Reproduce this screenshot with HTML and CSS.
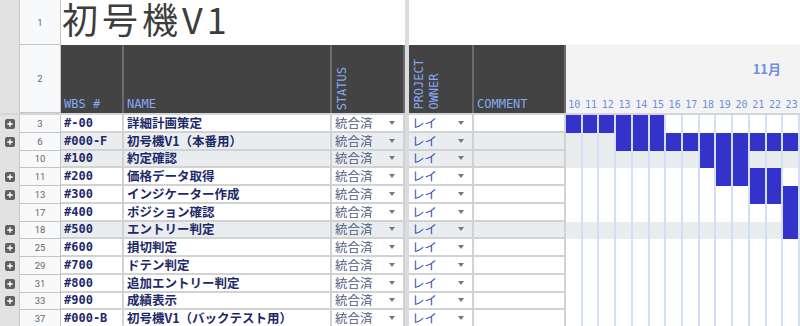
FILE: index.html
```html
<!DOCTYPE html>
<html lang="ja">
<head>
    <meta charset="UTF-8">
    <title>初号機V1 WBS</title>
    <link rel="stylesheet" href="styles.css">
</head>
<body>
<div class="sheet">

    <!-- row 1: title -->
    <div class="row r-title">
        <div class="gut"></div>
        <div class="num">1</div>
        <div class="title">初号機V1</div>
        <div class="freeze"></div>
        <div class="blank"></div>
    </div>

    <!-- row 2: column headers -->
    <div class="row r-head">
        <div class="gut"></div>
        <div class="num">2</div>
        <div class="th">WBS #</div>
        <div class="th">NAME</div>
        <div class="th"><span class="v">STATUS</span></div>
        <div class="freeze"></div>
        <div class="th"><span class="v">PROJECT<br>OWNER</span></div>
        <div class="th">COMMENT</div>
        <div class="ghead">
            <div class="month">11月</div>
            <div class="days">
                <span>10</span><span>11</span><span>12</span><span>13</span><span>14</span><span>15</span><span>16</span>
                <span>17</span><span>18</span><span>19</span><span>20</span><span>21</span><span>22</span><span>23</span>
            </div>
        </div>
    </div>

    <div class="split"></div>

    <!-- tasks -->
    <div class="row r-data">
        <div class="gut"><svg class="plus" viewBox="0 0 10 10"><rect width="10" height="10" rx="2"/><path d="M5 2.2v5.6M2.2 5h5.6"/></svg></div>
        <div class="num">3</div>
        <div class="c wbs">#-00</div>
        <div class="c name">詳細計画策定</div>
        <div class="c status">統合済<i class="arrow"></i></div>
        <div class="freeze"></div>
        <div class="c owner">レイ<i class="arrow"></i></div>
        <div class="c"></div>
        <div class="gantt"><i class="on"></i><i class="on"></i><i class="on"></i><i class="on"></i><i class="on"></i><i class="on"></i><i></i><i></i><i></i><i></i><i></i><i></i><i></i><i></i></div>
    </div>

    <div class="row r-data alt">
        <div class="gut"><svg class="plus" viewBox="0 0 10 10"><rect width="10" height="10" rx="2"/><path d="M5 2.2v5.6M2.2 5h5.6"/></svg></div>
        <div class="num">6</div>
        <div class="c wbs">#000-F</div>
        <div class="c name">初号機V1（本番用）</div>
        <div class="c status">統合済<i class="arrow"></i></div>
        <div class="freeze"></div>
        <div class="c owner">レイ<i class="arrow"></i></div>
        <div class="c"></div>
        <div class="gantt"><i></i><i></i><i></i><i class="on"></i><i class="on"></i><i class="on"></i><i class="on"></i><i class="on"></i><i class="on"></i><i class="on"></i><i class="on"></i><i class="on"></i><i class="on"></i><i class="on"></i></div>
    </div>

    <div class="row r-data alt">
        <div class="gut"></div>
        <div class="num">10</div>
        <div class="c wbs">#100</div>
        <div class="c name">約定確認</div>
        <div class="c status">統合済<i class="arrow"></i></div>
        <div class="freeze"></div>
        <div class="c owner">レイ<i class="arrow"></i></div>
        <div class="c"></div>
        <div class="gantt"><i></i><i></i><i></i><i></i><i></i><i></i><i></i><i></i><i class="on"></i><i class="on"></i><i class="on"></i><i></i><i></i><i></i></div>
    </div>

    <div class="row r-data">
        <div class="gut"><svg class="plus" viewBox="0 0 10 10"><rect width="10" height="10" rx="2"/><path d="M5 2.2v5.6M2.2 5h5.6"/></svg></div>
        <div class="num">11</div>
        <div class="c wbs">#200</div>
        <div class="c name">価格データ取得</div>
        <div class="c status">統合済<i class="arrow"></i></div>
        <div class="freeze"></div>
        <div class="c owner">レイ<i class="arrow"></i></div>
        <div class="c"></div>
        <div class="gantt"><i></i><i></i><i></i><i></i><i></i><i></i><i></i><i></i><i></i><i class="on"></i><i class="on"></i><i class="on"></i><i class="on"></i><i></i></div>
    </div>

    <div class="row r-data">
        <div class="gut"><svg class="plus" viewBox="0 0 10 10"><rect width="10" height="10" rx="2"/><path d="M5 2.2v5.6M2.2 5h5.6"/></svg></div>
        <div class="num">13</div>
        <div class="c wbs">#300</div>
        <div class="c name">インジケーター作成</div>
        <div class="c status">統合済<i class="arrow"></i></div>
        <div class="freeze"></div>
        <div class="c owner">レイ<i class="arrow"></i></div>
        <div class="c"></div>
        <div class="gantt"><i></i><i></i><i></i><i></i><i></i><i></i><i></i><i></i><i></i><i></i><i></i><i class="on"></i><i class="on"></i><i class="on"></i></div>
    </div>

    <div class="row r-data">
        <div class="gut"></div>
        <div class="num">17</div>
        <div class="c wbs">#400</div>
        <div class="c name">ポジション確認</div>
        <div class="c status">統合済<i class="arrow"></i></div>
        <div class="freeze"></div>
        <div class="c owner">レイ<i class="arrow"></i></div>
        <div class="c"></div>
        <div class="gantt"><i></i><i></i><i></i><i></i><i></i><i></i><i></i><i></i><i></i><i></i><i></i><i></i><i></i><i class="on"></i></div>
    </div>

    <div class="row r-data alt">
        <div class="gut"><svg class="plus" viewBox="0 0 10 10"><rect width="10" height="10" rx="2"/><path d="M5 2.2v5.6M2.2 5h5.6"/></svg></div>
        <div class="num">18</div>
        <div class="c wbs">#500</div>
        <div class="c name">エントリー判定</div>
        <div class="c status">統合済<i class="arrow"></i></div>
        <div class="freeze"></div>
        <div class="c owner">レイ<i class="arrow"></i></div>
        <div class="c"></div>
        <div class="gantt"><i></i><i></i><i></i><i></i><i></i><i></i><i></i><i></i><i></i><i></i><i></i><i></i><i></i><i class="on"></i></div>
    </div>

    <div class="row r-data">
        <div class="gut"><svg class="plus" viewBox="0 0 10 10"><rect width="10" height="10" rx="2"/><path d="M5 2.2v5.6M2.2 5h5.6"/></svg></div>
        <div class="num">25</div>
        <div class="c wbs">#600</div>
        <div class="c name">損切判定</div>
        <div class="c status">統合済<i class="arrow"></i></div>
        <div class="freeze"></div>
        <div class="c owner">レイ<i class="arrow"></i></div>
        <div class="c"></div>
        <div class="gantt"><i></i><i></i><i></i><i></i><i></i><i></i><i></i><i></i><i></i><i></i><i></i><i></i><i></i><i></i></div>
    </div>

    <div class="row r-data">
        <div class="gut"><svg class="plus" viewBox="0 0 10 10"><rect width="10" height="10" rx="2"/><path d="M5 2.2v5.6M2.2 5h5.6"/></svg></div>
        <div class="num">29</div>
        <div class="c wbs">#700</div>
        <div class="c name">ドテン判定</div>
        <div class="c status">統合済<i class="arrow"></i></div>
        <div class="freeze"></div>
        <div class="c owner">レイ<i class="arrow"></i></div>
        <div class="c"></div>
        <div class="gantt"><i></i><i></i><i></i><i></i><i></i><i></i><i></i><i></i><i></i><i></i><i></i><i></i><i></i><i></i></div>
    </div>

    <div class="row r-data">
        <div class="gut"><svg class="plus" viewBox="0 0 10 10"><rect width="10" height="10" rx="2"/><path d="M5 2.2v5.6M2.2 5h5.6"/></svg></div>
        <div class="num">31</div>
        <div class="c wbs">#800</div>
        <div class="c name">追加エントリー判定</div>
        <div class="c status">統合済<i class="arrow"></i></div>
        <div class="freeze"></div>
        <div class="c owner">レイ<i class="arrow"></i></div>
        <div class="c"></div>
        <div class="gantt"><i></i><i></i><i></i><i></i><i></i><i></i><i></i><i></i><i></i><i></i><i></i><i></i><i></i><i></i></div>
    </div>

    <div class="row r-data">
        <div class="gut"><svg class="plus" viewBox="0 0 10 10"><rect width="10" height="10" rx="2"/><path d="M5 2.2v5.6M2.2 5h5.6"/></svg></div>
        <div class="num">33</div>
        <div class="c wbs">#900</div>
        <div class="c name">成績表示</div>
        <div class="c status">統合済<i class="arrow"></i></div>
        <div class="freeze"></div>
        <div class="c owner">レイ<i class="arrow"></i></div>
        <div class="c"></div>
        <div class="gantt"><i></i><i></i><i></i><i></i><i></i><i></i><i></i><i></i><i></i><i></i><i></i><i></i><i></i><i></i></div>
    </div>

    <div class="row r-data">
        <div class="gut"></div>
        <div class="num">37</div>
        <div class="c wbs">#000-B</div>
        <div class="c name">初号機V1（バックテスト用）</div>
        <div class="c status">統合済<i class="arrow"></i></div>
        <div class="freeze"></div>
        <div class="c owner">レイ<i class="arrow"></i></div>
        <div class="c"></div>
        <div class="gantt"><i></i><i></i><i></i><i></i><i></i><i></i><i></i><i></i><i></i><i></i><i></i><i></i><i></i><i></i></div>
    </div>

</div>
</body>
</html>
```

FILE: styles.css
```css
* {
    box-sizing: border-box;
}
body {
    margin: 0;
    width: 800px;
    height: 326px;
    overflow: hidden;
    background-color: #fff;
    font-family: "Noto Sans CJK JP", "Noto Sans", sans-serif;
}
.row {
    display: grid;
    grid-template-columns: 20px 41px 63px 208px 73px 4px 65px 92px 234px;
}
.r-title {
    height: 45px;
}
.r-head {
    height: 68px;
}
.r-data {
    height: 17.75px;
}
.split {
    height: 2px;
    background-color: #d3d5d9;
}

/* left gutter + row numbers */
.gut {
    background-color: #e2e2e2;
    border-right: 1px solid #c9c9c9;
    display: flex;
    align-items: center;
    justify-content: center;
}
.plus {
    width: 10px;
    height: 10px;
}
.plus rect {
    fill: #5f5f5f;
}
.plus path {
    stroke: #fff;
    stroke-width: 1.4;
}
.num {
    background-color: #f8f9fa;
    border-right: 1px solid #c4c4c4;
    border-bottom: 1px solid #c4c4c4;
    color: #666;
    font: 9.5px Roboto, sans-serif;
    display: flex;
    align-items: center;
    justify-content: center;
}
.freeze {
    background-color: #d8dbe0;
}

/* title row */
.title {
    grid-column: 3 / 6;
    font-size: 36px;
    line-height: 37px;
    letter-spacing: 4px;
    color: #3d3d3d;
    padding-left: 1px;
    white-space: nowrap;
}
.blank {
    grid-column: 7 / -1;
}

/* header row */
.th {
    background-color: #434343;
    border-right: 2px solid #6b6b6b;
    color: #86a8f2;
    font: 12px "DejaVu Sans Mono", monospace;
    display: flex;
    align-items: flex-end;
    padding: 0 3px 2px;
}
.th .v {
    writing-mode: vertical-rl;
    transform: rotate(180deg);
    line-height: 15px;
    padding-top: 1px;
}
.ghead {
    background-color: #f3f3f3;
    display: flex;
    flex-direction: column;
    justify-content: flex-end;
}
.month {
    text-align: right;
    padding-right: 19px;
    margin-bottom: 22px;
    font-size: 13px;
    font-weight: bold;
    line-height: 17px;
    color: #6d8fe0;
}
.days {
    display: grid;
    grid-template-columns: repeat(14, 1fr);
    height: 14px;
    padding-bottom: 1px;
    font: 10px "DejaVu Sans Mono", monospace;
    color: #6d8fe0;
    text-align: center;
}

/* data cells */
.c {
    background-color: #fff;
    border-right: 2px solid #d2d2d2;
    border-bottom: 2px solid #d2d2d2;
    display: flex;
    align-items: center;
    padding-left: 3px;
    line-height: 14px;
    white-space: nowrap;
}
.alt .c,
.alt .gantt {
    background-color: #eaedf0;
}
.wbs {
    font: bold 12px/14px "DejaVu Sans Mono", monospace;
    color: #1d2a68;
}
.name {
    font-size: 12.5px;
    font-weight: bold;
    color: #1d2a68;
}
.status,
.owner {
    font-size: 12.5px;
    justify-content: space-between;
    padding-right: 8px;
}
.status {
    color: #4f5a7c;
}
.owner {
    color: #3b4fb0;
}
.arrow {
    width: 0;
    height: 0;
    border-left: 3.5px solid transparent;
    border-right: 3.5px solid transparent;
    border-top: 4px solid #777;
}

/* gantt */
.gantt {
    display: grid;
    grid-template-columns: repeat(14, 1fr);
    background-color: #fff;
}
.gantt i {
    border-right: 2px solid #d3dff7;
}
.gantt i.on {
    background-color: #3333cc;
}
```
